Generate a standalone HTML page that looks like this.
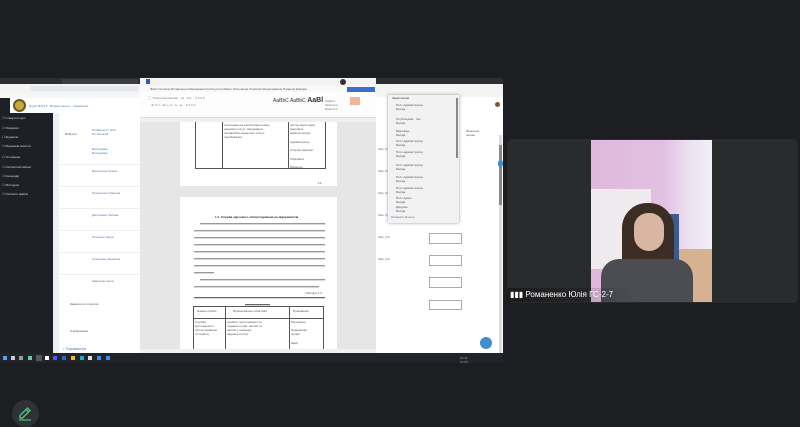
<!DOCTYPE html>
<html><head><meta charset="utf-8"><style>
*{margin:0;padding:0;box-sizing:border-box}
body{width:800px;height:424px;background:#1c1e21;position:relative;overflow:hidden;font-family:"Liberation Sans","Noto Sans CJK SC",sans-serif}
.a{position:absolute}
.t{position:absolute;font-size:3px;color:#555;white-space:nowrap;line-height:4px}
.ln{position:absolute;height:1px;background:#9a9a9a;box-shadow:0 1px 0 #d8d8d8}
.dl{position:absolute;height:1px;background:#999}
</style></head><body>
<!-- browser -->
<div class="a" style="left:0;top:78px;width:503px;height:6px;background:#2b2e33"></div>
<div class="a" style="left:62px;top:79px;width:76px;height:5px;background:#3a3d42"></div>
<div class="a" style="left:0;top:84px;width:140px;height:9px;background:#f3f3f3"></div>
<div class="a" style="left:30px;top:86px;width:108px;height:5px;background:#e4e6ea;border-radius:3px"></div>
<div class="a" style="left:0;top:93px;width:140px;height:5px;background:#f7f7f7"></div>
<div class="a" style="left:0;top:98px;width:140px;height:15px;background:#fff"></div>
<div class="a" style="left:13px;top:99px;width:13px;height:13px;border-radius:50%;background:#c9a93c;border:2px solid #6b5a20"></div>
<div class="a" style="left:0;top:98px;width:10px;height:15px;background:#1d2126"></div>
<div class="t" style="left:29px;top:104px;color:#4a78b5">Група ЗНТ2 ▾ · Власне занятт · Українська</div>
<div class="a" style="left:0;top:113px;width:53px;height:240px;background:#1d2126"></div>
<div class="t" style="left:2px;top:116px;color:#ddd">☐ Створити курс</div>
<div class="t" style="left:2px;top:126px;color:#ddd">☐ Повідомл.</div>
<div class="t" style="left:2px;top:135px;color:#ddd">☐ Журнали</div>
<div class="t" style="left:2px;top:144px;color:#ddd">☐ Мережеві поняття</div>
<div class="t" style="left:2px;top:155px;color:#ddd">☐ Усі новини</div>
<div class="t" style="left:2px;top:165px;color:#ddd">☐ Особистий кабінет</div>
<div class="t" style="left:2px;top:174px;color:#ddd">☐ Календар</div>
<div class="t" style="left:2px;top:183px;color:#ddd">☐ Мої курси</div>
<div class="t" style="left:2px;top:192px;color:#ddd">☐ Особисті файли</div>
<div class="a" style="left:53px;top:113px;width:87px;height:240px;background:#fff"></div>
<div class="a" style="left:53px;top:113px;width:6px;height:240px;background:#eef0f2"></div>
<div class="t" style="left:65px;top:132px">Вибрати</div>
<div class="t" style="left:92px;top:128px;color:#4a78b5">Прізвище ▾ / Ім'я/<br>По батькові</div>
<div class="t" style="left:92px;top:147px;color:#4a78b5">Володимир<br>Володимир</div>
<div class="t" style="left:92px;top:169px;color:#4a78b5">Валентина Олена</div>
<div class="t" style="left:92px;top:191px;color:#4a78b5">Прокопенко Марина</div>
<div class="t" style="left:92px;top:213px;color:#4a78b5">Дмитренко Оксана</div>
<div class="t" style="left:92px;top:235px;color:#4a78b5">Петренко Ірина</div>
<div class="t" style="left:92px;top:257px;color:#4a78b5">Семенова Людмила</div>
<div class="t" style="left:92px;top:279px;color:#4a78b5">Шевченко Анна</div>
<div class="t" style="left:70px;top:302px">Завершити з курсом</div>
<div class="t" style="left:70px;top:329px">З вибраними</div>
<div class="t" style="left:63px;top:347px;color:#4a78b5;font-size:4px">› Параметри</div>
<div class="dl" style="left:60px;top:164px;width:80px;background:#eee"></div>
<div class="dl" style="left:60px;top:186px;width:80px;background:#eee"></div>
<div class="dl" style="left:60px;top:208px;width:80px;background:#eee"></div>
<div class="dl" style="left:60px;top:230px;width:80px;background:#eee"></div>
<div class="dl" style="left:60px;top:252px;width:80px;background:#eee"></div>
<div class="dl" style="left:60px;top:274px;width:80px;background:#eee"></div>
<!-- right part browser -->
<div class="a" style="left:376px;top:84px;width:127px;height:269px;background:#fff"></div>
<div class="a" style="left:376px;top:84px;width:127px;height:13px;background:#f3f3f3"></div>
<div class="a" style="left:495px;top:102px;width:5px;height:5px;border-radius:50%;background:#8a5040"></div>
<div class="a" style="left:499px;top:135px;width:3px;height:218px;background:#ddd"></div>
<div class="a" style="left:499px;top:145px;width:3px;height:60px;background:#888"></div>
<div class="t" style="left:466px;top:129px">Фінальна<br>оцінка</div>
<div class="t" style="left:378px;top:147px;color:#4a78b5">Має (13)</div>
<div class="t" style="left:378px;top:169px;color:#4a78b5">Має (13)</div>
<div class="t" style="left:378px;top:191px;color:#4a78b5">Має (13)</div>
<div class="t" style="left:378px;top:213px;color:#4a78b5">Має (13)</div>
<div class="t" style="left:378px;top:235px;color:#4a78b5">Має (13)</div>
<div class="t" style="left:378px;top:257px;color:#4a78b5">Має (13)</div>
<div class="a" style="left:429px;top:233px;width:33px;height:11px;border:1px solid #aaa"></div>
<div class="a" style="left:429px;top:255px;width:33px;height:11px;border:1px solid #aaa"></div>
<div class="a" style="left:429px;top:277px;width:33px;height:11px;border:1px solid #aaa"></div>
<div class="a" style="left:429px;top:300px;width:33px;height:10px;border:1px solid #aaa"></div>
<div class="a" style="left:480px;top:337px;width:12px;height:12px;border-radius:50%;background:#3f8fd0"></div>
<div class="a" style="left:498px;top:160px;width:5px;height:7px;border-radius:3px;background:#3f8fd0"></div>
<!-- comments pane -->
<div class="a" style="left:388px;top:95px;width:71px;height:128px;background:#f2f2f2;box-shadow:0 0 3px rgba(0,0,0,.4)"></div>
<div class="t" style="left:392px;top:96px;color:#333">Закріплення</div>
<div class="t" style="left:396px;top:103px">Пост-адміністратор ·<br>Бесіда</div>
<div class="t" style="left:396px;top:117px">Опублікував · Чат<br>Бесіда</div>
<div class="t" style="left:396px;top:129px">Відповідь ·<br>Бесіда</div>
<div class="t" style="left:396px;top:139px">Пост-адміністратор<br>Бесіда</div>
<div class="t" style="left:396px;top:150px">Пост-адміністратор ·<br>Бесіда</div>
<div class="t" style="left:396px;top:163px">Пост-адміністратор<br>Бесіда</div>
<div class="t" style="left:396px;top:175px">Пост-адміністратор<br>Бесіда</div>
<div class="t" style="left:396px;top:186px">Пост-адміністратор<br>Бесіда</div>
<div class="t" style="left:396px;top:196px">Пост-адмін<br>Бесіда</div>
<div class="t" style="left:396px;top:205px">Дякуємо<br>Бесіда</div>
<div class="t" style="left:391px;top:215px;color:#4a78b5">Показати більше</div>
<div class="a" style="left:456px;top:98px;width:2px;height:60px;background:#888"></div>
<!-- Word -->
<div class="a" style="left:140px;top:78px;width:236px;height:275px;background:#e6e6e6"></div>
<div class="a" style="left:140px;top:78px;width:236px;height:8px;background:#f3f3f3"></div>
<div class="a" style="left:140px;top:86px;width:236px;height:6px;background:#f9f9f9"></div>
<div class="a" style="left:146px;top:79px;width:4px;height:5px;background:#2b5ab0"></div>
<div class="a" style="left:340px;top:79px;width:6px;height:6px;border-radius:50%;background:#333"></div>
<div class="t" style="left:150px;top:87px;font-size:3px">Файл Основне Вставлення Малювання Конструктор Макет Посилання Розсилки Рецензування Подання Довідка</div>
<div class="a" style="left:347px;top:87px;width:28px;height:5px;background:#3a6ed0"></div>
<div class="a" style="left:140px;top:92px;width:236px;height:26px;background:#fdfdfd;border-bottom:1px solid #ddd"></div>
<div class="t" style="left:148px;top:96px;color:#777">▢ &nbsp;Times New Roman · 14 · A A &nbsp;·&nbsp; ≡ ≡ ≡ ≡</div>
<div class="t" style="left:148px;top:103px;color:#777">&nbsp;&nbsp;&nbsp; Ж К Ч · ab x₂ x² · A · ▲ · &nbsp;≡ ≡ ≡ ≡ ·</div>
<div class="t" style="left:273px;top:99px;font-size:5px;color:#333">AaBbC AaBbC <b style="font-size:7px">AaBl</b></div>
<div class="t" style="left:325px;top:99px;color:#777">Знайти<br>Замінити<br>Виділити</div>
<div class="a" style="left:350px;top:97px;width:10px;height:8px;background:#f3b59a"></div>
<div class="a" style="left:140px;top:118px;width:236px;height:4px;background:#f0f0f0"></div>
<div class="a" style="left:180px;top:122px;width:157px;height:64px;background:#fff"></div>
<div class="a" style="left:195px;top:122px;width:131px;height:47px;border:1px solid #555;border-top:none"></div>
<div class="a" style="left:222px;top:122px;width:1px;height:47px;background:#555"></div>
<div class="a" style="left:288px;top:122px;width:1px;height:47px;background:#555"></div>
<div class="t" style="left:224px;top:123px">посилання на засоби відпочинку,<br>надання послуг харчування,<br>професійно-медичних послуг<br>перебування</div>
<div class="t" style="left:290px;top:123px">сектор відпочинку<br>(закупівлі<br>адміністратор)</div>
<div class="t" style="left:290px;top:140px">Адміністратор</div>
<div class="t" style="left:290px;top:148px">Старша офіціант</div>
<div class="t" style="left:290px;top:157px">Офіціанти</div>
<div class="t" style="left:290px;top:165px">Бармени</div>
<div class="t" style="left:318px;top:181px">13</div>
<div class="a" style="left:180px;top:197px;width:157px;height:156px;background:#fff"></div>
<div class="t" style="left:215px;top:215px;color:#222;font-weight:bold">1.4. Служба харчового обслуговування на підприємстві</div>
<div class="ln" style="left:200px;top:223px;width:125px"></div>
<div class="ln" style="left:194px;top:230px;width:131px"></div>
<div class="ln" style="left:194px;top:237px;width:131px"></div>
<div class="ln" style="left:194px;top:244px;width:131px"></div>
<div class="ln" style="left:194px;top:251px;width:131px"></div>
<div class="ln" style="left:194px;top:258px;width:131px"></div>
<div class="ln" style="left:194px;top:265px;width:131px"></div>
<div class="ln" style="left:194px;top:272px;width:20px"></div>
<div class="ln" style="left:200px;top:279px;width:125px"></div>
<div class="ln" style="left:194px;top:286px;width:125px"></div>
<div class="t" style="left:305px;top:291px">Таблиця 1.4</div>
<div class="ln" style="left:194px;top:297px;width:131px;background:#666"></div>
<div class="ln" style="left:245px;top:304px;width:25px;background:#666"></div>
<div class="a" style="left:193px;top:306px;width:131px;height:47px;border:1px solid #555;border-bottom:none"></div>
<div class="a" style="left:225px;top:306px;width:1px;height:47px;background:#555"></div>
<div class="a" style="left:289px;top:306px;width:1px;height:47px;background:#555"></div>
<div class="a" style="left:193px;top:318px;width:131px;height:1px;background:#555"></div>
<div class="t" style="left:197px;top:309px">Назва служби</div>
<div class="t" style="left:233px;top:309px">Функціональні обов'язки</div>
<div class="t" style="left:293px;top:309px">Працівники</div>
<div class="t" style="left:195px;top:320px">Служба<br>ресторанного<br>обслуговування<br>та сервісу</div>
<div class="t" style="left:227px;top:320px">прийом, приготування та<br>подання страв, напоїв та<br>напоїв у номерах;<br>надання послуг</div>
<div class="t" style="left:291px;top:320px">Менеджер</div>
<div class="t" style="left:291px;top:328px">Працівники<br>Кухарі</div>
<div class="t" style="left:291px;top:341px">Шеф</div>
<div class="a" style="left:140px;top:349px;width:236px;height:4px;background:#f0f0f0"></div>
<!-- taskbar -->
<div class="a" style="left:0;top:353px;width:503px;height:10px;background:#20252c"></div>
<div class="a" style="left:3px;top:356px;width:4px;height:4px;background:#4aa3ff"></div>
<div class="a" style="left:11px;top:356px;width:4px;height:4px;background:#ccc"></div>
<div class="a" style="left:19px;top:356px;width:4px;height:4px;background:#999"></div>
<div class="a" style="left:28px;top:356px;width:4px;height:4px;background:#6c9"></div>
<div class="a" style="left:36px;top:355px;width:6px;height:6px;background:#556"></div>
<div class="a" style="left:45px;top:356px;width:4px;height:4px;background:#fff"></div>
<div class="a" style="left:53px;top:356px;width:4px;height:4px;background:#55f"></div>
<div class="a" style="left:62px;top:356px;width:4px;height:4px;background:#36c"></div>
<div class="a" style="left:71px;top:356px;width:4px;height:4px;background:#eb3"></div>
<div class="a" style="left:80px;top:356px;width:4px;height:4px;background:#2ad"></div>
<div class="a" style="left:88px;top:356px;width:4px;height:4px;background:#ddd"></div>
<div class="a" style="left:97px;top:356px;width:4px;height:4px;background:#48e"></div>
<div class="a" style="left:106px;top:356px;width:4px;height:4px;background:#48e"></div>
<div class="t" style="left:460px;top:356px;color:#aaa">15:42<br>15.05</div>
<!-- video tile -->
<div class="a" style="left:507px;top:139px;width:291px;height:164px;background:#2a2b2d;border-radius:5px;overflow:hidden">
 <div class="a" style="left:84px;top:1px;width:121px;height:162px;background:linear-gradient(90deg,#dfb8dc 0%,#e2c0e2 60%,#ecdff0 80%,#f2f0f6 100%)"></div>
 <div class="a" style="left:84px;top:50px;width:60px;height:80px;background:#eeeaee"></div>
 <div class="a" style="left:150px;top:75px;width:22px;height:88px;background:#3c5a8c"></div>
 <div class="a" style="left:172px;top:110px;width:33px;height:53px;background:#d7b290"></div>
 <div class="a" style="left:115px;top:64px;width:52px;height:99px;background:#3b2c24;border-radius:25px 25px 4px 4px"></div>
 <div class="a" style="left:94px;top:120px;width:92px;height:43px;background:#4b4d52;border-radius:18px 18px 0 0"></div>
 <div class="a" style="left:127px;top:74px;width:30px;height:38px;background:#d9b6a2;border-radius:14px 14px 15px 15px"></div>
 <div class="a" style="left:0;top:149px;width:130px;height:14px;background:linear-gradient(90deg,rgba(0,0,0,.35),rgba(0,0,0,0))"></div>
 <div class="a" style="left:3px;top:151px;font-size:8px;color:#fff;white-space:nowrap">▮▮▮ Романенко Юлія ГС-2-7</div>
</div>
<!-- pencil button -->
<div class="a" style="left:12px;top:400px;width:27px;height:27px;border-radius:50%;background:#2e3135"></div>
<svg class="a" style="left:17px;top:405px" width="16" height="16" viewBox="0 0 16 16"><path d="M3 13 L3 10.5 L10.5 3 L13 5.5 L5.5 13 Z M9 4.5 L11.5 7" fill="none" stroke="#4cc27a" stroke-width="1.4"/><path d="M2 15 H14" stroke="#4cc27a" stroke-width="1.2"/></svg>
</body></html>
